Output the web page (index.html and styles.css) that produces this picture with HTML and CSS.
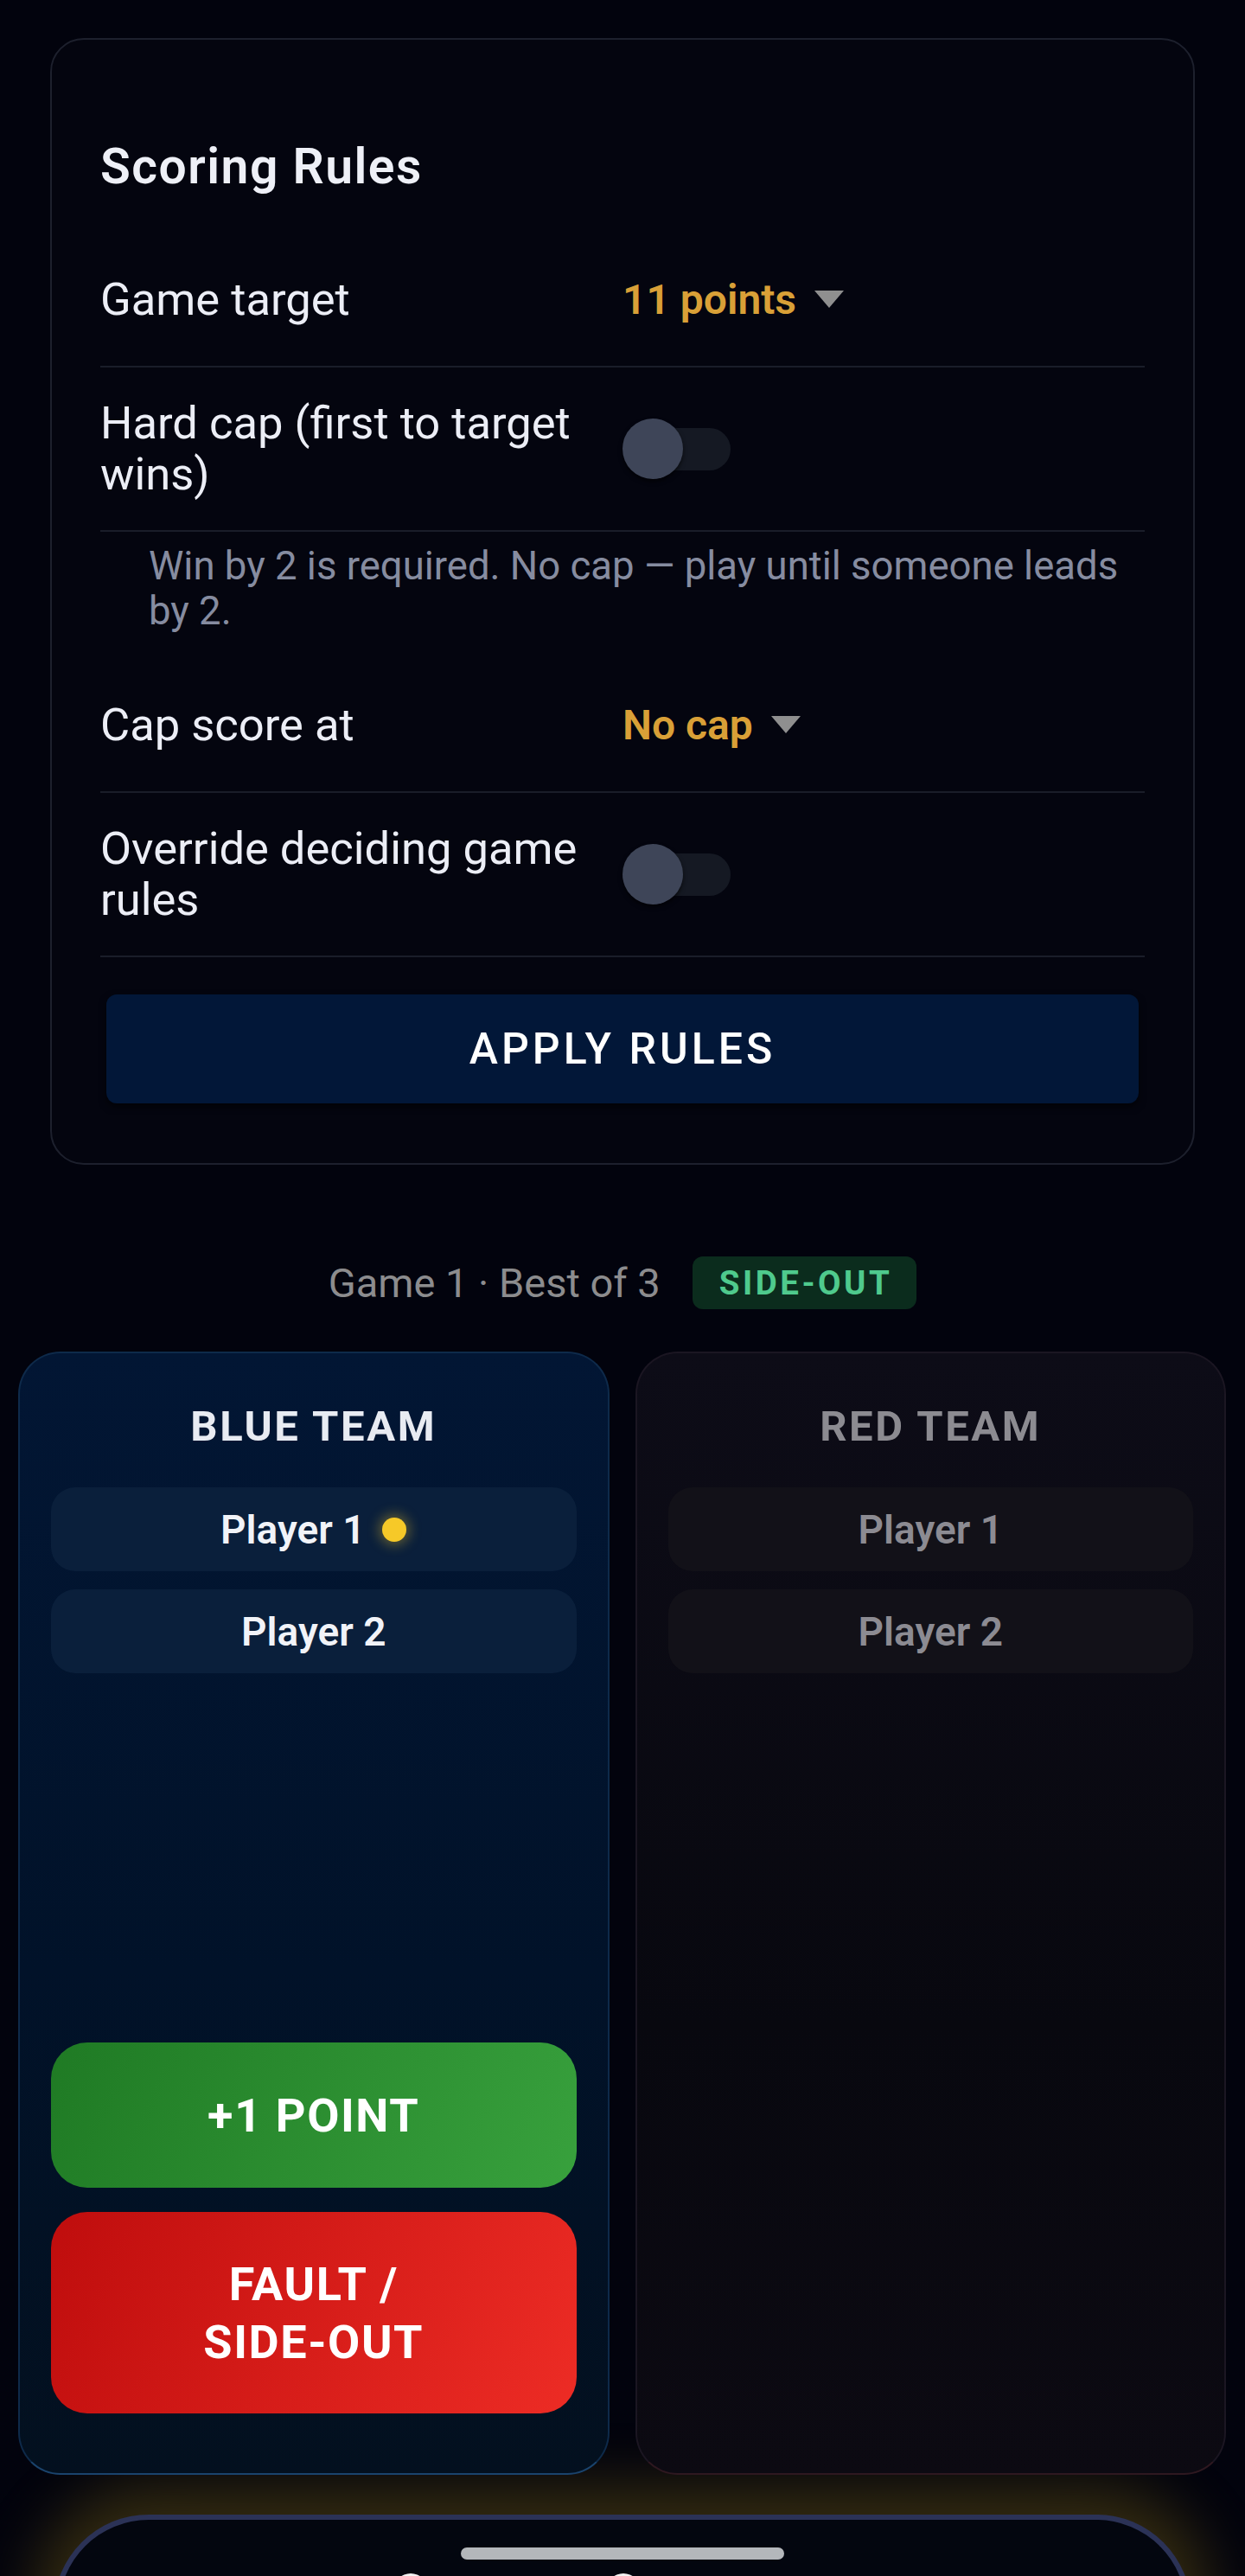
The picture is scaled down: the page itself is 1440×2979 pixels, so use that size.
FILE: index.html
```html
<!DOCTYPE html>
<html lang="en">
<head>
<meta charset="utf-8">
<title>Scoring Rules</title>
<link rel="stylesheet" href="styles.css">
</head>
<body>
<div class="page">
  <section class="rules-card">
    <h2 class="rules-title">Scoring Rules</h2>
    <div class="rule-row">
      <span class="rule-label">Game target</span>
      <div class="select"><span class="select-value">11 points</span><span class="caret"></span></div>
    </div>
    <div class="rule-row">
      <span class="rule-label">Hard cap (first to target wins)</span>
      <span class="switch"><span class="switch-track"></span><span class="switch-thumb"></span></span>
    </div>
    <p class="rule-help">Win by 2 is required. No cap — play until someone leads by 2.</p>
    <div class="rule-row">
      <span class="rule-label">Cap score at</span>
      <div class="select"><span class="select-value">No cap</span><span class="caret"></span></div>
    </div>
    <div class="rule-row">
      <span class="rule-label">Override deciding game rules</span>
      <span class="switch"><span class="switch-track"></span><span class="switch-thumb"></span></span>
    </div>
    <button class="apply-btn">APPLY RULES</button>
  </section>

  <div class="game-meta">
    <span class="meta-text">Game 1 · Best of 3</span>
    <span class="badge">SIDE-OUT</span>
  </div>

  <div class="teams">
    <div class="team team-blue">
      <h3 class="team-title">BLUE TEAM</h3>
      <div class="players">
        <div class="player">Player 1<span class="serve-dot"></span></div>
        <div class="player">Player 2</div>
      </div>
      <div class="actions">
        <button class="action action-point">+1 POINT</button>
        <button class="action action-fault"><span>FAULT /</span><span>SIDE-OUT</span></button>
      </div>
    </div>
    <div class="team team-red">
      <h3 class="team-title">RED TEAM</h3>
      <div class="players">
        <div class="player">Player 1</div>
        <div class="player">Player 2</div>
      </div>
    </div>
  </div>

  <div class="sheet">
    <div class="sheet-handle"></div>
    <div class="sheet-icons"><span class="sheet-icon"></span><span class="sheet-icon"></span></div>
  </div>
</div>
</body>
</html>
```

FILE: styles.css
```css
* { box-sizing: border-box; }
html, body { margin: 0; padding: 0; }
body {
  background: #02030d;
  font-family: Roboto, "Liberation Sans", Arial, sans-serif;
  color: #eceef6;
}
.page {
  height: 2979px;
  overflow: hidden;
  padding-top: 44px;
}

/* Scoring rules card */
.rules-card {
  margin: 0 58px;
  border: 2px solid #1d202d;
  border-radius: 39px;
  background: #04050f;
  padding: 114px 56px 69px;
}
.rules-title {
  margin: 0 0 43px;
  font-size: 57px;
  line-height: 66px;
  font-weight: 600;
  letter-spacing: 1.5px;
  color: #eef0f7;
}
.rule-row {
  display: grid;
  grid-template-columns: 1fr 1fr;
  align-items: center;
  padding: 35px 0;
  border-bottom: 2px solid #1a1d29;
}
.rule-label {
  font-size: 52.5px;
  line-height: 59px;
  color: #eceef6;
}
.select {
  display: flex;
  align-items: center;
  gap: 21px;
  height: 84px;
}
.select-value {
  font-size: 48px;
  font-weight: 600;
  color: #d9a037;
}
.caret {
  width: 0;
  height: 0;
  border-left: 17px solid transparent;
  border-right: 17px solid transparent;
  border-top: 20px solid #8f8f8f;
}
.switch {
  position: relative;
  display: block;
  width: 126px;
  height: 70px;
}
.switch-track {
  position: absolute;
  left: 6px;
  top: 10.5px;
  width: 119px;
  height: 49px;
  border-radius: 25px;
  background: #151923;
}
.switch-thumb {
  position: absolute;
  left: 0;
  top: 0;
  width: 70px;
  height: 70px;
  border-radius: 50%;
  background: #3e4558;
  box-shadow: 0 3px 5px rgba(0, 0, 0, 0.6);
}
.rule-help {
  margin: 0;
  padding: 14px 0 28px 56px;
  font-size: 45.5px;
  line-height: 52px;
  color: #868ca0;
}
.apply-btn {
  display: block;
  width: calc(100% - 14px);
  margin: 43px 7px 0;
  height: 126px;
  border: 0;
  border-radius: 12px;
  background: #021738;
  color: #ffffff;
  font-family: inherit;
  font-size: 50px;
  font-weight: 500;
  letter-spacing: 4px;
  box-shadow: 0 4px 8px rgba(0, 0, 0, 0.6);
}

/* Game meta */
.game-meta {
  display: flex;
  justify-content: center;
  align-items: center;
  gap: 37px;
  margin-top: 106px;
  height: 61px;
}
.meta-text {
  font-size: 47px;
  color: #8c8c8e;
}
.badge {
  height: 61px;
  display: flex;
  align-items: center;
  padding: 0 28px 0 31px;
  border-radius: 12px;
  background: #0b2c1d;
  color: #4fca8d;
  font-size: 38.5px;
  font-weight: 700;
  letter-spacing: 3.5px;
}

/* Teams */
.teams {
  display: grid;
  grid-template-columns: 1fr 1fr;
  gap: 30px;
  margin: 49px 22px 0 21px;
}
.team {
  height: 1299px;
  border-radius: 49px;
  border: 2px solid;
  padding: 55px 36px 69px;
  display: flex;
  flex-direction: column;
}
.team-blue {
  background: linear-gradient(180deg, #021634 0%, #011229 55%, #03101f 100%);
  border-color: #0e2a4a #0e2a4a #1a436c;
}
.team-red {
  background: linear-gradient(180deg, #0d0c17 0%, #08080f 60%, #0c0a12 100%);
  border-color: #1b1622 #1b1622 #2e1820;
}
.team-title {
  text-align: center;
  margin: 0 0 41px;
  font-size: 49px;
  line-height: 59px;
  font-weight: 700;
  letter-spacing: 2.6px;
}
.team-blue .team-title { color: #e8ebf2; }
.team-red .team-title { color: #8c8b91; }
.players {
  display: flex;
  flex-direction: column;
  gap: 21px;
}
.player {
  height: 97px;
  border-radius: 28px;
  display: flex;
  align-items: center;
  justify-content: center;
  gap: 20px;
  font-size: 46px;
  font-weight: 600;
}
.team-blue .player { background: #0a1f3b; color: #f1f3f8; }
.team-red .player { background: #121118; color: #8c8b92; }
.serve-dot {
  width: 28px;
  height: 28px;
  border-radius: 50%;
  background: #f6c928;
  box-shadow: 0 0 14px 4px rgba(246, 201, 40, 0.35);
}
.actions {
  margin-top: auto;
  display: flex;
  flex-direction: column;
  gap: 28px;
}
.action {
  border: 0;
  border-radius: 42px;
  color: #ffffff;
  font-family: inherit;
  font-weight: 700;
  font-size: 54px;
  line-height: 67px;
  letter-spacing: 1.6px;
}
.action-point {
  height: 168px;
  background: linear-gradient(115deg, #1f7a24 0%, #38a13d 100%);
}
.action-fault {
  height: 233px;
  background: linear-gradient(115deg, #bf0d0d 0%, #ed2c25 100%);
}
.action-fault span { display: block; }

/* Bottom sheet */
.sheet {
  margin: 46px 62px 0;
  height: 200px;
  border: 6px solid #2b3256;
  border-bottom: 0;
  border-radius: 110px 110px 0 0;
  background: #03060f;
  box-shadow: 0 -10px 70px 22px rgba(185, 150, 25, 0.28);
  padding-top: 32px;
}
.sheet-handle {
  width: 374px;
  height: 14px;
  border-radius: 7px;
  background: #b4b7bb;
  margin: 0 auto;
}
.sheet-icons {
  display: flex;
  gap: 206px;
  padding-left: 387px;
  margin-top: 16px;
}
.sheet-icon {
  width: 40px;
  height: 40px;
  border-radius: 50%;
  background: #f2f2f2;
}
```
